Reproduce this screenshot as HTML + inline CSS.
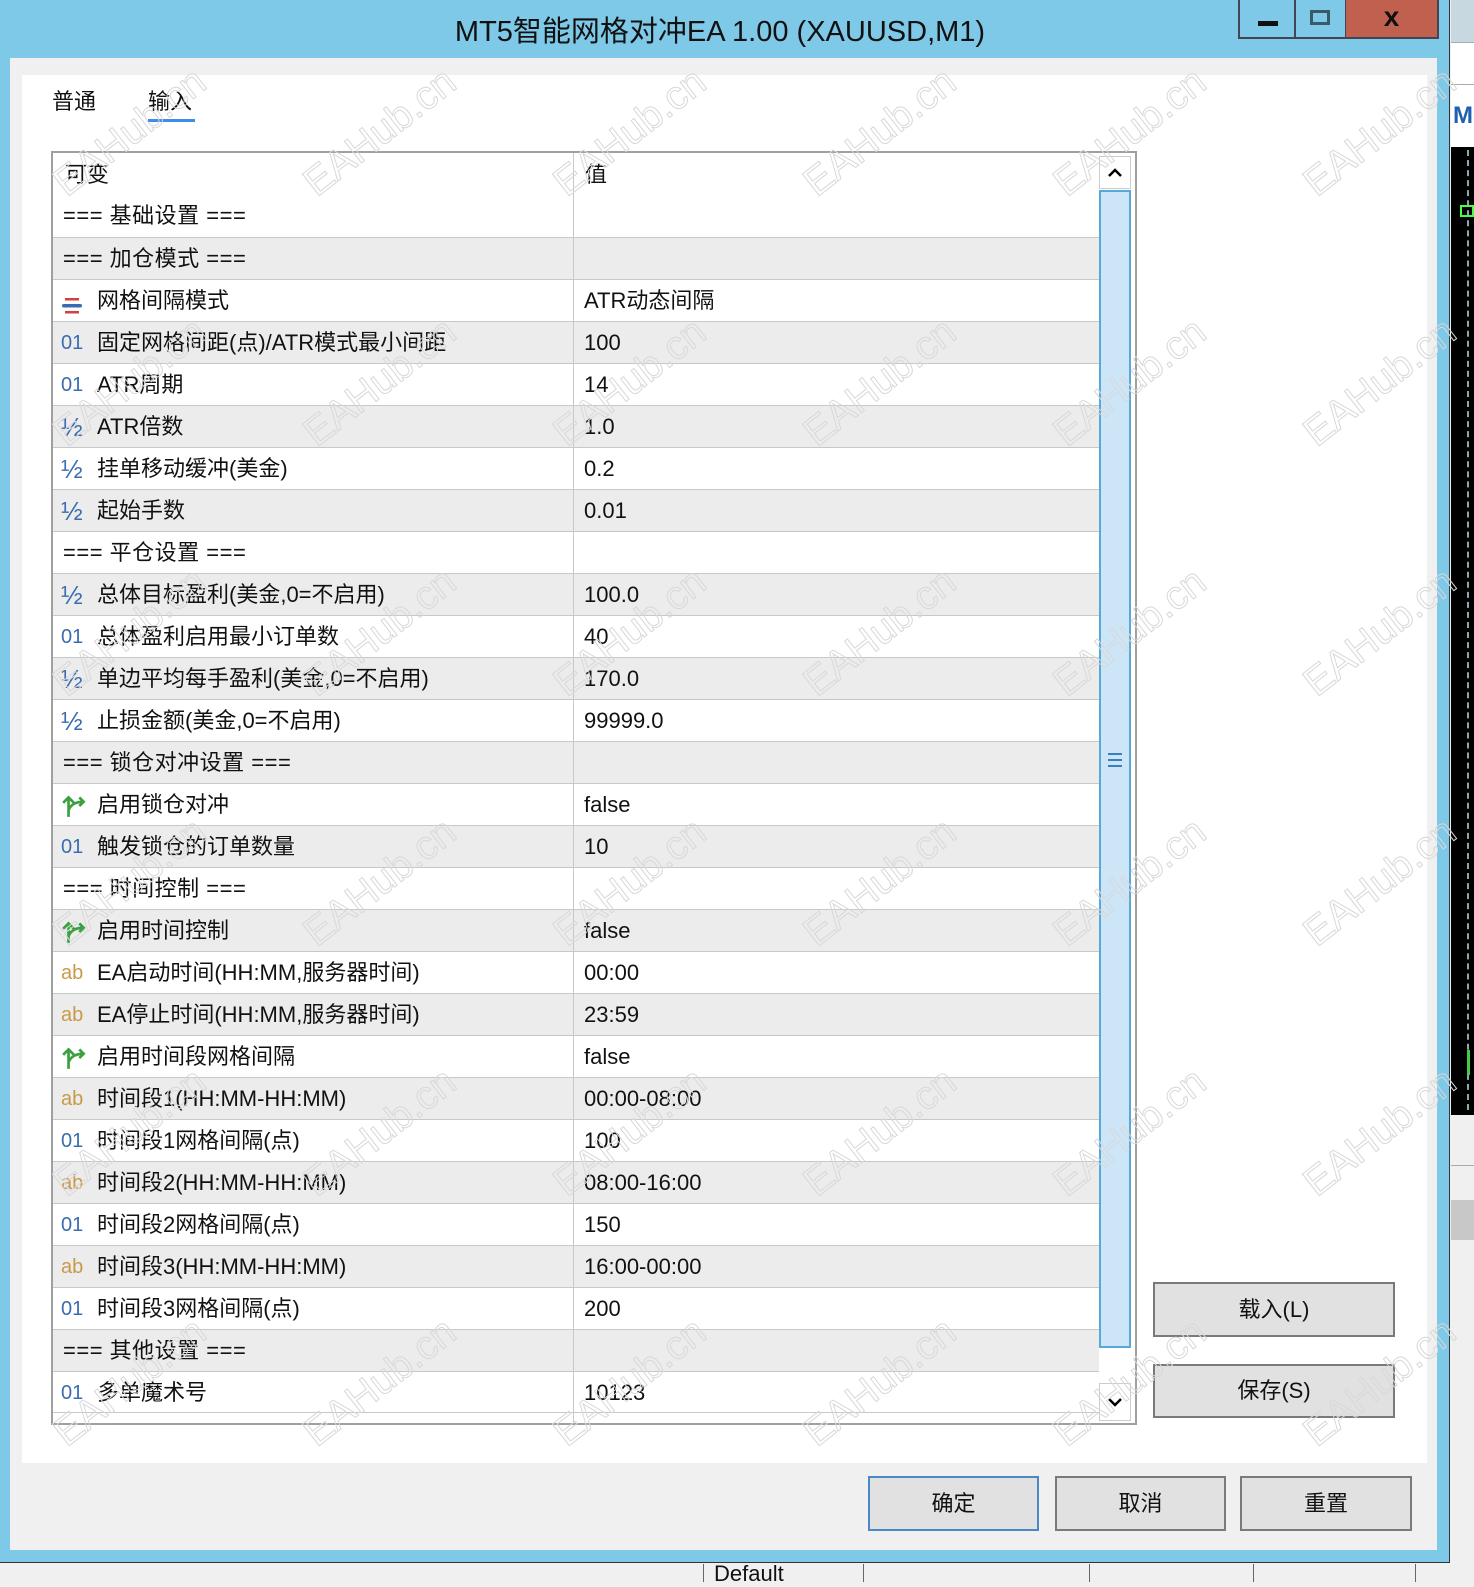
<!DOCTYPE html>
<html><head><meta charset="utf-8"><style>
*{margin:0;padding:0;box-sizing:border-box}
body{width:1474px;height:1582px;position:relative;overflow:hidden;background:#f0f0f0;font-family:"Liberation Sans","Noto Sans CJK SC",sans-serif;color:#111}
.abs{position:absolute}
#frame{left:0;top:0;width:1450px;height:1563px;background:#7ec8e8;border-right:1px solid #333;border-bottom:1px solid #333}
#title{left:0;top:8px;width:1440px;text-align:center;font-size:29px;color:#111}
.tb{top:0;height:39px;border:2px solid #445;border-top:none}
#client{left:10px;top:58px;width:1427px;height:1492px;background:#f0f0f0}
#panel{left:22px;top:75px;width:1405px;height:1388px;background:#fff}
.tab{top:84px;font-size:22px}
#table{left:51px;top:151px;width:1086px;height:1274px;border:2px solid #a0a0a0;background:#fff;overflow:hidden}
.row{position:absolute;left:0;width:1047px;height:42px;border-top:1px solid #c8c8c8;font-size:22px;line-height:42px}
.row.g{background:#ececec}
.row .n{position:absolute;left:44px;top:0;white-space:nowrap}
.row .n.s{left:10px;letter-spacing:0.5px}
.row .v{position:absolute;left:531px;top:0}
.row .i{position:absolute;left:8px;top:0;width:30px;font-size:20px}
.i.o{color:#3a6db0}
.i.h{color:#3a6db0;font-size:26px!important}
.i.a{color:#c89a48}
.btn{background:#e1e1e1;border:2px solid #7a7a7a;font-size:22px;text-align:center}
.wm{position:absolute;font-size:40px;color:transparent;-webkit-text-stroke:1px #d8d8d8;transform:rotate(-38deg);white-space:nowrap;font-family:"Liberation Sans",sans-serif}
</style></head><body>
<div id="frame" class="abs"></div>
<div id="title" class="abs">MT5智能网格对冲EA 1.00 (XAUUSD,M1)</div>
<div class="abs tb" style="left:1238px;width:58px"><div class="abs" style="left:18px;top:21px;width:20px;height:5px;background:#111"></div></div>
<div class="abs tb" style="left:1294px;width:53px;border-left:none"><div class="abs" style="left:16px;top:10px;width:20px;height:15px;border:3px solid #3a5a6a"></div></div>
<div class="abs tb" style="left:1346px;width:93px;background:#c0604f;border-left:none;font-size:28px;font-weight:bold;text-align:center;line-height:34px">x</div>
<div class="abs" style="left:1451px;top:0;width:23px;height:42px;background:#c8d8e0"></div>
<div class="abs" style="left:1451px;top:42px;width:23px;height:105px;background:#fff;border-top:1px solid #aaa"></div>
<div class="abs" style="left:1451px;top:84px;width:23px;height:1px;background:#aaa"></div>
<div class="abs" style="left:1453px;top:102px;font-size:24px;color:#2060b0;font-weight:bold">M</div>
<div class="abs" style="left:1451px;top:147px;width:23px;height:968px;background:#000"></div>
<div class="abs" style="left:1467px;top:150px;width:2px;height:960px;border-left:2px dashed #8aa"></div>
<div class="abs" style="left:1460px;top:205px;width:14px;height:12px;border:2px solid #4f4"></div>
<div class="abs" style="left:1467px;top:1050px;width:3px;height:25px;background:#4c4"></div>
<div class="abs" style="left:1451px;top:1115px;width:23px;height:50px;background:#f0f0f0"></div>
<div class="abs" style="left:1451px;top:1165px;width:23px;height:1px;background:#aaa"></div>
<div class="abs" style="left:1451px;top:1200px;width:23px;height:40px;background:#c8c8c8"></div>
<div class="abs" style="left:0;top:1564px;width:1474px;height:18px;background:#f0f0f0"></div>
<div class="abs" style="left:703px;top:1564px;width:1px;height:18px;background:#666"></div>
<div class="abs" style="left:863px;top:1564px;width:1px;height:18px;background:#666"></div>
<div class="abs" style="left:1089px;top:1564px;width:1px;height:18px;background:#666"></div>
<div class="abs" style="left:1253px;top:1564px;width:1px;height:18px;background:#666"></div>
<div class="abs" style="left:1415px;top:1564px;width:1px;height:18px;background:#666"></div>
<div class="abs" style="left:714px;top:1561px;font-size:22px">Default</div>

<div id="client" class="abs"></div>
<div id="panel" class="abs"></div>
<div class="abs tab" style="left:52px">普通</div>
<div class="abs tab" style="left:148px">输入</div>
<div class="abs" style="left:148px;top:119px;width:47px;height:3px;background:#3c8ee8"></div>

<div id="table" class="abs">
<div class="abs" style="left:12px;top:6px;font-size:22px;line-height:32px">可变</div>
<div class="abs" style="left:532px;top:6px;font-size:22px;line-height:32px">值</div>
<div class="row" style="top:42px;border-top:none"><span class="n s">=== 基础设置 ===</span></div>
<div class="row g" style="top:84px"><span class="n s">=== 加仓模式 ===</span></div>
<div class="row" style="top:126px"><span class="i" style="top:10px"><svg width="22" height="22" viewBox="0 0 22 22"><rect x="4" y="3" width="14" height="2.5" fill="#d04040"/><rect x="1" y="9" width="20" height="3.5" rx="1.7" fill="#3a6db0"/><rect x="4" y="16" width="14" height="2.5" fill="#d04040"/></svg></span><span class="n">网格间隔模式</span><span class="v">ATR动态间隔</span></div>
<div class="row g" style="top:168px"><span class="i o">01</span><span class="n">固定网格间距(点)/ATR模式最小间距</span><span class="v">100</span></div>
<div class="row" style="top:210px"><span class="i o">01</span><span class="n">ATR周期</span><span class="v">14</span></div>
<div class="row g" style="top:252px"><span class="i h">½</span><span class="n">ATR倍数</span><span class="v">1.0</span></div>
<div class="row" style="top:294px"><span class="i h">½</span><span class="n">挂单移动缓冲(美金)</span><span class="v">0.2</span></div>
<div class="row g" style="top:336px"><span class="i h">½</span><span class="n">起始手数</span><span class="v">0.01</span></div>
<div class="row" style="top:378px"><span class="n s">=== 平仓设置 ===</span></div>
<div class="row g" style="top:420px"><span class="i h">½</span><span class="n">总体目标盈利(美金,0=不启用)</span><span class="v">100.0</span></div>
<div class="row" style="top:462px"><span class="i o">01</span><span class="n">总体盈利启用最小订单数</span><span class="v">40</span></div>
<div class="row g" style="top:504px"><span class="i h">½</span><span class="n">单边平均每手盈利(美金,0=不启用)</span><span class="v">170.0</span></div>
<div class="row" style="top:546px"><span class="i h">½</span><span class="n">止损金额(美金,0=不启用)</span><span class="v">99999.0</span></div>
<div class="row g" style="top:588px"><span class="n s">=== 锁仓对冲设置 ===</span></div>
<div class="row" style="top:630px"><span class="i" style="top:7px"><svg width="28" height="28" viewBox="0 0 26 26" fill="none" stroke="#3aa040" stroke-width="2.5"><path d="M7 24V6M2 11l5-5 5 5M7 18c2-6 8-8 14-8M17 6l4 4-4 4"/></svg></span><span class="n">启用锁仓对冲</span><span class="v">false</span></div>
<div class="row g" style="top:672px"><span class="i o">01</span><span class="n">触发锁仓的订单数量</span><span class="v">10</span></div>
<div class="row" style="top:714px"><span class="n s">=== 时间控制 ===</span></div>
<div class="row g" style="top:756px"><span class="i" style="top:7px"><svg width="28" height="28" viewBox="0 0 26 26" fill="none" stroke="#3aa040" stroke-width="2.5"><path d="M7 24V6M2 11l5-5 5 5M7 18c2-6 8-8 14-8M17 6l4 4-4 4"/></svg></span><span class="n">启用时间控制</span><span class="v">false</span></div>
<div class="row" style="top:798px"><span class="i a">ab</span><span class="n">EA启动时间(HH:MM,服务器时间)</span><span class="v">00:00</span></div>
<div class="row g" style="top:840px"><span class="i a">ab</span><span class="n">EA停止时间(HH:MM,服务器时间)</span><span class="v">23:59</span></div>
<div class="row" style="top:882px"><span class="i" style="top:7px"><svg width="28" height="28" viewBox="0 0 26 26" fill="none" stroke="#3aa040" stroke-width="2.5"><path d="M7 24V6M2 11l5-5 5 5M7 18c2-6 8-8 14-8M17 6l4 4-4 4"/></svg></span><span class="n">启用时间段网格间隔</span><span class="v">false</span></div>
<div class="row g" style="top:924px"><span class="i a">ab</span><span class="n">时间段1(HH:MM-HH:MM)</span><span class="v">00:00-08:00</span></div>
<div class="row" style="top:966px"><span class="i o">01</span><span class="n">时间段1网格间隔(点)</span><span class="v">100</span></div>
<div class="row g" style="top:1008px"><span class="i a">ab</span><span class="n">时间段2(HH:MM-HH:MM)</span><span class="v">08:00-16:00</span></div>
<div class="row" style="top:1050px"><span class="i o">01</span><span class="n">时间段2网格间隔(点)</span><span class="v">150</span></div>
<div class="row g" style="top:1092px"><span class="i a">ab</span><span class="n">时间段3(HH:MM-HH:MM)</span><span class="v">16:00-00:00</span></div>
<div class="row" style="top:1134px"><span class="i o">01</span><span class="n">时间段3网格间隔(点)</span><span class="v">200</span></div>
<div class="row g" style="top:1176px"><span class="n s">=== 其他设置 ===</span></div>
<div class="row" style="top:1218px;border-bottom:1px solid #c8c8c8"><span class="i o">01</span><span class="n">多单魔术号</span><span class="v">10123</span></div>
<div class="abs" style="left:520px;top:0;width:1px;height:1274px;background:#c8c8c8"></div>
<div class="abs" style="left:1046px;top:0;width:38px;height:1274px;background:#fff"></div>
<div class="abs" style="left:1046px;top:3px;width:32px;height:33px;border:1px solid #ccc"><svg width="30" height="31" viewBox="0 0 30 31"><path d="M9 19l6-6 6 6" fill="none" stroke="#000" stroke-width="2.5"/></svg></div>
<div class="abs" style="left:1046px;top:37px;width:32px;height:1158px;background:#cce6f8;border:2px solid #5aa8d8"></div>
<div class="abs" style="left:1055px;top:600px;width:14px;height:14px;border-top:2px solid #3a80c0;border-bottom:2px solid #3a80c0"><div style="margin-top:4px;height:2px;background:#3a80c0"></div></div>
<div class="abs" style="left:1046px;top:1230px;width:32px;height:38px;border:1px solid #ccc"><svg width="30" height="36" viewBox="0 0 30 36"><path d="M9 15l6 6 6-6" fill="none" stroke="#000" stroke-width="2.5"/></svg></div>
</div>

<div class="abs btn" style="left:1153px;top:1282px;width:242px;height:55px;line-height:51px">载入(L)</div>
<div class="abs btn" style="left:1153px;top:1364px;width:242px;height:54px;line-height:50px">保存(S)</div>
<div class="abs btn" style="left:868px;top:1476px;width:171px;height:55px;line-height:51px;border-color:#4a88c8">确定</div>
<div class="abs btn" style="left:1055px;top:1476px;width:171px;height:55px;line-height:51px">取消</div>
<div class="abs btn" style="left:1240px;top:1476px;width:172px;height:55px;line-height:51px">重置</div>

<div class="wm" style="left:40px;top:110px">EAHub.cn</div><div class="wm" style="left:290px;top:110px">EAHub.cn</div><div class="wm" style="left:540px;top:110px">EAHub.cn</div><div class="wm" style="left:790px;top:110px">EAHub.cn</div><div class="wm" style="left:1040px;top:110px">EAHub.cn</div><div class="wm" style="left:1290px;top:110px">EAHub.cn</div>
<div class="wm" style="left:40px;top:360px">EAHub.cn</div><div class="wm" style="left:290px;top:360px">EAHub.cn</div><div class="wm" style="left:540px;top:360px">EAHub.cn</div><div class="wm" style="left:790px;top:360px">EAHub.cn</div><div class="wm" style="left:1040px;top:360px">EAHub.cn</div><div class="wm" style="left:1290px;top:360px">EAHub.cn</div>
<div class="wm" style="left:40px;top:610px">EAHub.cn</div><div class="wm" style="left:290px;top:610px">EAHub.cn</div><div class="wm" style="left:540px;top:610px">EAHub.cn</div><div class="wm" style="left:790px;top:610px">EAHub.cn</div><div class="wm" style="left:1040px;top:610px">EAHub.cn</div><div class="wm" style="left:1290px;top:610px">EAHub.cn</div>
<div class="wm" style="left:40px;top:860px">EAHub.cn</div><div class="wm" style="left:290px;top:860px">EAHub.cn</div><div class="wm" style="left:540px;top:860px">EAHub.cn</div><div class="wm" style="left:790px;top:860px">EAHub.cn</div><div class="wm" style="left:1040px;top:860px">EAHub.cn</div><div class="wm" style="left:1290px;top:860px">EAHub.cn</div>
<div class="wm" style="left:40px;top:1110px">EAHub.cn</div><div class="wm" style="left:290px;top:1110px">EAHub.cn</div><div class="wm" style="left:540px;top:1110px">EAHub.cn</div><div class="wm" style="left:790px;top:1110px">EAHub.cn</div><div class="wm" style="left:1040px;top:1110px">EAHub.cn</div><div class="wm" style="left:1290px;top:1110px">EAHub.cn</div>
<div class="wm" style="left:40px;top:1360px">EAHub.cn</div><div class="wm" style="left:290px;top:1360px">EAHub.cn</div><div class="wm" style="left:540px;top:1360px">EAHub.cn</div><div class="wm" style="left:790px;top:1360px">EAHub.cn</div><div class="wm" style="left:1040px;top:1360px">EAHub.cn</div><div class="wm" style="left:1290px;top:1360px">EAHub.cn</div>
</body></html>
